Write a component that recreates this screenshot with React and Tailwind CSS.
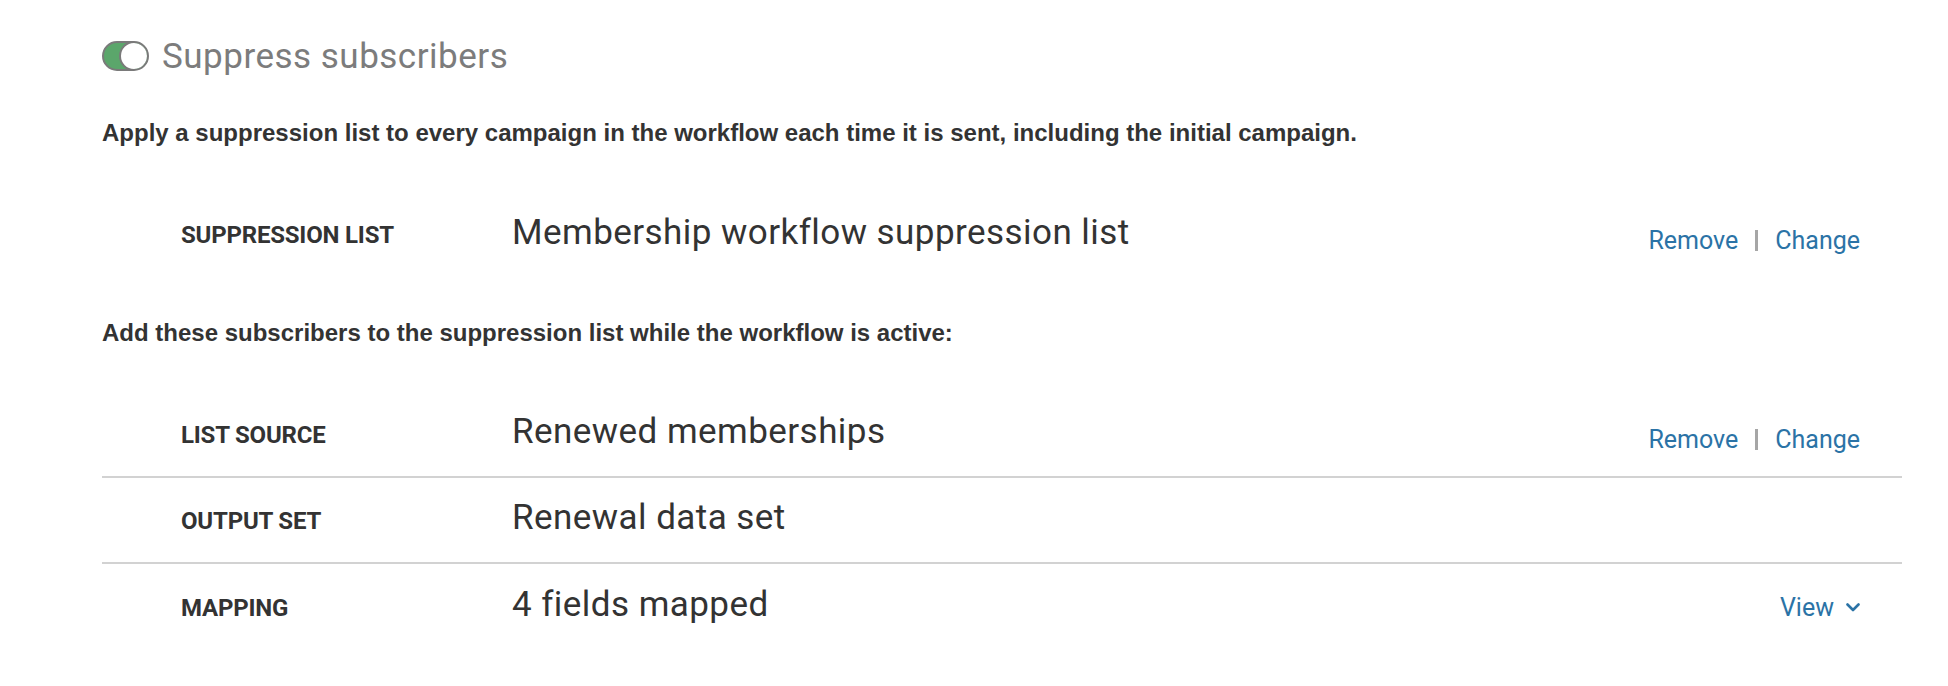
import React from "react";

const LINK = "text-[#2b73a6]";

function Toggle() {
  return (
    <span className="relative shrink-0 w-[47px] h-[30px] rounded-full border-2 border-[#7a7a7a] bg-[#5ba66b] overflow-hidden">
      <span className="absolute right-[-2px] top-[-2px] w-[30px] h-[30px] rounded-full border-2 border-[#7a7a7a] bg-white" />
    </span>
  );
}

function Actions({ children, className = "mt-4" }) {
  return (
    <div className={`${className} flex items-center text-[25px] leading-none ${LINK}`}>
      {children}
    </div>
  );
}

function RemoveChange() {
  return (
    <Actions>
      <span>Remove</span>
      <span className="mx-[17px] w-[3px] h-[21px] bg-[#a6a6a6]" />
      <span>Change</span>
    </Actions>
  );
}

function Row({ label, value, border, actions, className = "" }) {
  return (
    <div
      className={`flex items-center h-[86px] pr-[42px] ${className} ${
        border ? "border-b-2 border-[#d2d2d2]" : ""
      }`}
    >
      <div className="w-[410px] shrink-0 pl-[79px] mt-[6px] text-[24px] font-bold tracking-[-0.2px] text-[#333] leading-none">
        {label}
      </div>
      <div className="flex-1 text-[35px] tracking-[0.45px] text-[#333] leading-none">{value}</div>
      {actions}
    </div>
  );
}

export default function App() {
  return (
    <div className="bg-white w-full min-h-[686px] pl-[102px] pr-[46px] pt-[41px] font-['Roboto',sans-serif]">
      {/* Header */}
      <div className="flex items-center gap-[13px] h-[30px]">
        <Toggle />
        <h2 className="text-[35px] leading-none tracking-[0.5px] text-[#7c7c7c]">Suppress subscribers</h2>
      </div>

      <p className="mt-[48px] text-[24px] leading-[28px] font-bold text-[#333] font-['Liberation_Sans',Arial,sans-serif]">
        Apply a suppression list to every campaign in the workflow each time it is sent, including the initial campaign.
      </p>

      <div className="mt-[42px]">
        <Row
          label="SUPPRESSION LIST"
          value="Membership workflow suppression list"
          actions={<RemoveChange />}
        />
      </div>

      <p className="mt-[44px] text-[24px] leading-[28px] font-bold text-[#333] font-['Liberation_Sans',Arial,sans-serif]">
        Add these subscribers to the suppression list while the workflow is active:
      </p>

      <div className="mt-[45px]">
        <Row
          label="LIST SOURCE"
          value="Renewed memberships"
          border
          className="pb-[5px]"
          actions={<RemoveChange />}
        />
        <Row label="OUTPUT SET" value="Renewal data set" border className="pb-[5px]" />
        <Row
          label="MAPPING"
          value="4 fields mapped"
          className="pb-[5px]"
          actions={
            <Actions className="mt-[6px]">
              <span>View</span>
              <svg
                className="ml-[12px]"
                width="14"
                height="9"
                viewBox="0 0 14 9"
                fill="none"
                stroke="currentColor"
                strokeWidth="2.6"
                strokeLinecap="round"
                strokeLinejoin="round"
              >
                <polyline points="1.5,1.5 7,7 12.5,1.5" />
              </svg>
            </Actions>
          }
        />
      </div>
    </div>
  );
}
